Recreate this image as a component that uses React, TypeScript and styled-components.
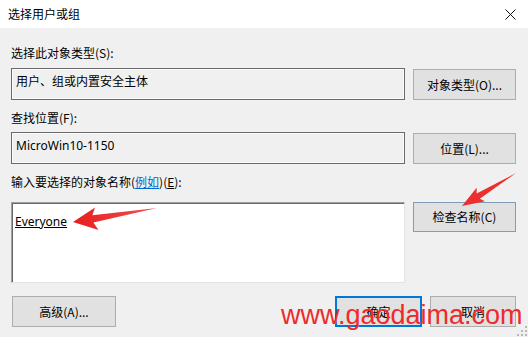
import styled, { createGlobalStyle } from 'styled-components';

const GlobalStyle = createGlobalStyle`
  html, body {
    margin: 0;
    padding: 0;
    background: #f0f0f0;
  }
  body {
    font-family: "Noto Sans", "Noto Sans CJK SC", sans-serif;
    font-size: 12px;
    color: #000;
  }
`;

const Dialog = styled.div`
  position: relative;
  width: 528px;
  height: 337px;
  background: #f0f0f0;
  overflow: hidden;
`;

const TitleBar = styled.div`
  height: 28px;
  background: #fff;
  display: flex;
  align-items: center;
  justify-content: space-between;
  padding: 0 12px 0 8px;
  box-sizing: border-box;
`;

const Title = styled.span`
  font-family: "Noto Sans CJK SC", sans-serif;
  font-size: 12px;
  line-height: 16px;
  margin-top: -1px;
`;

const Body = styled.div`
  display: flex;
  flex-direction: column;
  padding: 17px 12px 0 11px;
`;

const Label = styled.div<{ $before?: number; $after: number }>`
  font-family: "Noto Sans CJK SC", sans-serif;
  line-height: 16px;
  height: 16px;
  margin-top: ${(p) => p.$before ?? 0}px;
  margin-bottom: ${(p) => p.$after}px;
`;

const Link = styled.span`
  color: #0066cc;
  text-decoration: underline;
`;

const Key = styled.span`
  text-decoration: underline;
`;

const Row = styled.div<{ $align: string }>`
  display: grid;
  grid-template-columns: 394px 103px;
  column-gap: 8px;
  align-items: ${(p) => p.$align};
`;

const ReadBox = styled.div`
  height: 32px;
  box-sizing: border-box;
  border: 1px solid #6a6a6a;
  box-shadow: inset 0 0 0 1px #fbfbfb;
  padding: 5px 0 0 4px;
  line-height: 16px;
`;

const InputBox = styled.div`
  height: 81px;
  box-sizing: border-box;
  background: #fff;
  border-top: 1px solid #a0a0a0;
  border-left: 1px solid #a0a0a0;
  border-right: 1px solid #e3e3e3;
  border-bottom: 1px solid #e3e3e3;
  box-shadow: inset 1px 1px 0 #696969;
  padding: 11px 0 0 3px;
  line-height: 16px;
`;

const Name = styled.span`
  text-decoration: underline;
`;

const Button = styled.div<{ $width?: number; $height?: number; $border?: string; $thick?: boolean }>`
  box-sizing: border-box;
  width: ${(p) => (p.$width ? `${p.$width}px` : 'auto')};
  height: ${(p) => p.$height ?? 31}px;
  background: #e1e1e1;
  border: ${(p) => (p.$thick ? 2 : 1)}px solid ${(p) => p.$border ?? '#adadad'};
  display: flex;
  align-items: center;
  justify-content: center;
  font-family: "Noto Sans CJK SC", sans-serif;
  line-height: 16px;
`;

const BottomRow = styled.div`
  display: flex;
  gap: 8px;
  margin-top: 13px;
  padding-left: 1px;
`;

const Spacer = styled.div`
  flex: 1;
`;

const Watermark = styled.div`
  position: absolute;
  left: 281px;
  top: 302px;
  font-family: "Liberation Sans", Arial, sans-serif;
  font-size: 27px;
  line-height: 27px;
  color: #ee2b2b;
  white-space: nowrap;
  pointer-events: none;
`;

const Overlay = styled.svg`
  position: absolute;
  left: 0;
  top: 0;
  pointer-events: none;
`;

const Grip = styled.svg`
  position: absolute;
  right: 1px;
  bottom: 1px;
`;

export default function App() {
  return (
    <Dialog>
      <GlobalStyle />
      <TitleBar>
        <Title>选择用户或组</Title>
        <svg width="11" height="11" viewBox="0 0 11 11">
          <path d="M0.5 0.5 L10.5 10.5 M10.5 0.5 L0.5 10.5" stroke="#111" strokeWidth="1" />
        </svg>
      </TitleBar>
      <Body>
        <Label $after={7}>选择此对象类型(S):</Label>
        <Row $align="end">
          <ReadBox>用户、组或内置安全主体</ReadBox>
          <Button>对象类型(O)...</Button>
        </Row>

        <Label $before={10} $after={6}>查找位置(F):</Label>
        <Row $align="end">
          <ReadBox>MicroWin10-1150</ReadBox>
          <Button>位置(L)...</Button>
        </Row>

        <Label $before={10} $after={12}>
          输入要选择的对象名称(<Link>例如</Link>)(<Key>E</Key>):
        </Label>
        <Row $align="start">
          <InputBox>
            <Name>Everyone</Name>
          </InputBox>
          <Button $height={30} $border="#7f9db9">检查名称(C)</Button>
        </Row>

        <BottomRow>
          <Button $width={104}>高级(A)...</Button>
          <Spacer />
          <Button $width={87} $border="#0078d7" $thick>确定</Button>
          <Button $width={86}>取消</Button>
        </BottomRow>
      </Body>

      <Overlay width="528" height="337" viewBox="0 0 528 337">
        <defs>
          <linearGradient id="arr" x1="0" y1="0" x2="1" y2="0">
            <stop offset="0" stopColor="#e81e1e" />
            <stop offset="1" stopColor="#f25050" />
          </linearGradient>
        </defs>
        <polygon
          points="73,222 95,207.5 92.4,215.3 157,208 93.4,222.6 98.5,230"
          fill="url(#arr)"
        />
        <polygon
          points="462,206 476.6,187.7 476.7,193.5 516,173 479.8,198.7 485,201.3"
          fill="#ec2f2f"
        />
      </Overlay>

      <Watermark>www.gaodaima.com</Watermark>

      <Grip width="10" height="10" viewBox="0 0 10 10">
        <rect x="8" y="0" width="2" height="2" fill="#b8b8b8" />
        <rect x="4" y="4" width="2" height="2" fill="#b8b8b8" />
        <rect x="8" y="4" width="2" height="2" fill="#b8b8b8" />
        <rect x="0" y="8" width="2" height="2" fill="#b8b8b8" />
        <rect x="4" y="8" width="2" height="2" fill="#b8b8b8" />
        <rect x="8" y="8" width="2" height="2" fill="#b8b8b8" />
      </Grip>
    </Dialog>
  );
}
